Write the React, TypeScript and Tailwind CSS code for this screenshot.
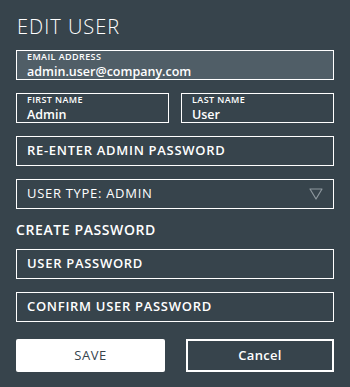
const Field = ({ label, value, className = '' }: { label: string; value: string; className?: string }) => (
  <div className={`h-[30px] border border-white px-[10px] pt-[1px] flex flex-col gap-[3px] ${className}`}>
    <span className="text-[9px] leading-[10px] font-semibold text-white tracking-[0.4px]">{label}</span>
    <span className="text-[12.5px] leading-[13px] font-semibold text-white">{value}</span>
  </div>
);

const Input = ({ text }: { text: string }) => (
  <div className="h-[30px] border border-white px-[10px] flex items-center">
    <span className="text-[13px] font-semibold text-white tracking-[0.7px]">{text}</span>
  </div>
);

const App = () => {
  return (
    <div
      className="w-[350px] h-[387px] bg-[#37444c] px-4 pt-[15px] text-white"
      style={{ fontFamily: '"Open Sans", "Liberation Sans", sans-serif' }}
    >
      <h1 className="text-[20px] leading-[24px] font-light tracking-[1px] mb-[11px] pl-[1px]">EDIT USER</h1>

      <Field label="EMAIL ADDRESS" value="admin.user@company.com" className="bg-[#505e67]" />

      <div className="flex gap-[12px] mt-[13px]">
        <Field label="FIRST NAME" value="Admin" className="flex-1" />
        <Field label="LAST NAME" value="User" className="flex-1" />
      </div>

      <div className="mt-[13px]">
        <Input text="RE-ENTER ADMIN PASSWORD" />
      </div>

      <div className="mt-[13px] h-[30px] border border-white px-[10px] flex items-center justify-between">
        <span className="text-[13px] text-white tracking-[0.7px]">USER TYPE: ADMIN</span>
        <svg width="14" height="12" viewBox="0 0 14 12">
          <path d="M1 1 H13 L7 11 Z" fill="none" stroke="#8d979d" strokeWidth="1.2" strokeLinejoin="round" />
        </svg>
      </div>

      <div className="mt-[13px] text-[14px] font-semibold leading-[16px] tracking-[0.6px]">CREATE PASSWORD</div>

      <div className="mt-[11px]">
        <Input text="USER PASSWORD" />
      </div>
      <div className="mt-[13px]">
        <Input text="CONFIRM USER PASSWORD" />
      </div>

      <div className="flex justify-between mt-[17px]">
        <button className="w-[149px] h-[33px] bg-white rounded-[2px] text-[#37444c] text-[13px] tracking-[0.5px]">SAVE</button>
        <button className="w-[148px] h-[33px] border-2 border-white text-white text-[13px] font-semibold tracking-[0.3px]">Cancel</button>
      </div>
    </div>
  );
};

export default App;
